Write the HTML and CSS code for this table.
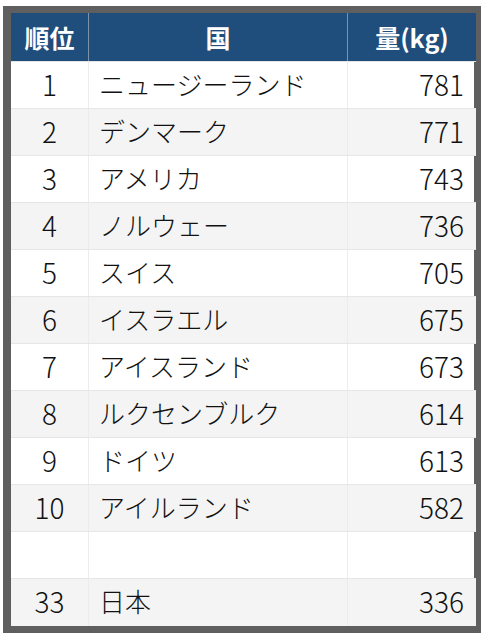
FILE: index.html
```html
<!DOCTYPE html>
<html lang="ja">
<head>
<meta charset="utf-8">
<link rel="stylesheet" href="styles.css">
</head>
<body>
<div class="frame">
<table class="rank">
<thead>
<tr><th class="c1">順位</th><th class="c2">国</th><th class="c3">量(kg)</th></tr>
</thead>
<tbody>
<tr><td class="c1">1</td><td class="c2">ニュージーランド</td><td class="c3">781</td></tr>
<tr><td class="c1">2</td><td class="c2">デンマーク</td><td class="c3">771</td></tr>
<tr><td class="c1">3</td><td class="c2">アメリカ</td><td class="c3">743</td></tr>
<tr><td class="c1">4</td><td class="c2">ノルウェー</td><td class="c3">736</td></tr>
<tr><td class="c1">5</td><td class="c2">スイス</td><td class="c3">705</td></tr>
<tr><td class="c1">6</td><td class="c2">イスラエル</td><td class="c3">675</td></tr>
<tr><td class="c1">7</td><td class="c2">アイスランド</td><td class="c3">673</td></tr>
<tr><td class="c1">8</td><td class="c2">ルクセンブルク</td><td class="c3">614</td></tr>
<tr><td class="c1">9</td><td class="c2">ドイツ</td><td class="c3">613</td></tr>
<tr><td class="c1">10</td><td class="c2">アイルランド</td><td class="c3">582</td></tr>
<tr><td class="c1"></td><td class="c2"></td><td class="c3"></td></tr>
<tr><td class="c1">33</td><td class="c2">日本</td><td class="c3">336</td></tr>
</tbody>
</table>
</div>
</body>
</html>
```
FILE: styles.css
```css
html, body {
  margin: 0;
  padding: 0;
  background: #ffffff;
}
body {
  font-family: "Noto Sans CJK JP", "Noto Sans", sans-serif;
  color: #111111;
}
.frame {
  margin: 6px 0 0 3px;
  width: 463px;
  border: 7px solid #5f5f5f;
  border-left-width: 8px;
  background: #fff;
}
.rank {
  width: 463px;
  border-collapse: collapse;
  table-layout: fixed;
}
.rank th, .rank td {
  padding: 0;
  overflow: hidden;
  white-space: nowrap;
  vertical-align: middle;
}
.rank th {
  height: 48px;
  background: #1f4e7c;
  color: #fff;
  font-weight: 700;
  font-size: 25px;
  line-height: 1;
  text-align: center;
  border-bottom: 1px solid #e4e4e4;
  border-left: 1px solid #7e93aa;
}
.rank th:first-child { border-left: none; }
.rank td {
  box-sizing: border-box;
  height: 47px;
  font-size: 26px;
  font-weight: 300;
  line-height: 1;
  padding-bottom: 3px;
  border-bottom: 1px solid #e6e6e6;
  border-left: 1px solid #ececec;
}
.rank td:first-child { border-left: none; }
.rank tbody tr:last-child td { border-bottom: none; }
.rank tbody tr:nth-child(even) td { background: #f4f4f4; }
.c1 { width: 77px; }
.c2 { width: 258px; }
.c3 { width: 128px; }
td.c1 { text-align: center; font-size: 28px; }
td.c2 { text-align: left; padding-left: 10px; }
td.c3 { text-align: right; padding-right: 12px; font-size: 28px; }
```
